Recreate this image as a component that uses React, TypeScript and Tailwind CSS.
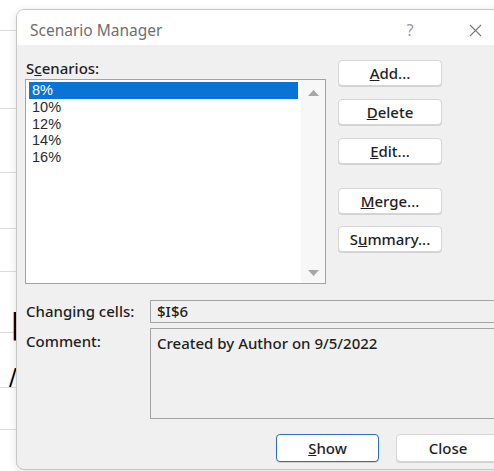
import type { ReactNode } from 'react'

const scenarios = ['8%', '10%', '12%', '14%', '16%']

function DialogButton({
  children,
  primary = false,
  className = '',
}: {
  children: ReactNode
  primary?: boolean
  className?: string
}) {
  return (
    <button
      type="button"
      className={`flex items-center justify-center rounded-[4px] bg-white text-[15px] font-medium text-[#1f1f1f] shadow-[0_1px_0_rgba(0,0,0,0.12)] ${
        primary ? 'border-[1.5px] border-[#2a6fc4]' : 'border border-[#d6d6d6]'
      } ${className}`}
    >
      {children}
    </button>
  )
}

export default function App() {
  return (
    <div className="relative h-[471px] w-[494px] overflow-hidden bg-white font-['Noto_Sans','Open_Sans',sans-serif]">
      {/* worksheet peeking out behind the dialog */}
      <div className="absolute inset-y-0 left-0 flex w-[18px] flex-col">
        <div className="h-[31px] border-b border-[#dcdcdc]" />
        <div className="h-[78px] border-b border-[#dcdcdc]" />
        <div className="h-[64px] border-b border-[#dcdcdc]" />
        <div className="h-[56px] border-b border-[#dcdcdc]" />
        <div className="h-[43px] border-b border-[#dcdcdc]" />
        <div className="h-[61px] border-b border-[#dcdcdc]" />
        <div className="h-[55px] border-b border-[#dcdcdc]" />
        <div className="h-[42px] border-b border-[#dcdcdc]" />
      </div>
      <span className="absolute left-[11px] top-[309px] font-['DejaVu_Sans',sans-serif] text-[32px] font-bold leading-none text-black">
        [
      </span>
      <span className="absolute left-[9px] top-[366px] font-['DejaVu_Sans',sans-serif] text-[23px] leading-none text-black">
        /
      </span>

      <div className="relative pl-[16px] pt-[9px]">
        <div className="flex h-[461px] w-[520px] flex-col overflow-hidden rounded-[8px] border border-[#c6c6c6] bg-[#f0f0f0] shadow-[0_2px_8px_rgba(0,0,0,0.12)]">
          {/* title bar */}
          <div className="flex h-[35px] shrink-0 items-center bg-white pt-[6px] text-[15.5px] text-[#6f6f6f]">
            <span className="w-[377px] pl-[13px]">Scenario Manager</span>
            <span className="w-[32px] text-center text-[#9a9a9a]">?</span>
            <span className="ml-[33px] flex w-[32px] justify-center">
              <svg width="13" height="13" viewBox="0 0 13 13" fill="none">
                <path d="M1 1L12 12M12 1L1 12" stroke="#7a7a7a" strokeWidth="1.1" />
              </svg>
            </span>
          </div>

          {/* body */}
          <div className="flex flex-col pl-[8px] pt-[14px] text-[15px] font-medium text-[#1f1f1f]">
            <div className="flex">
              <div className="flex flex-col">
                <label className="h-[18px] pl-[1px] leading-[18px]">
                  S<u>c</u>enarios:
                </label>
                <div className="mt-[2px] flex h-[205px] w-[301px] border border-[#a3a3a3] bg-white">
                  <ul className="flex flex-1 flex-col pl-[3px] pr-[3px] pt-[2px] font-['Liberation_Sans',sans-serif] text-[14.5px] font-normal">
                    {scenarios.map((s, i) => (
                      <li
                        key={s}
                        className={`h-[16.75px] pl-[3px] leading-[16.75px] ${
                          i === 0 ? 'bg-[#0a74d6] text-white' : 'text-[#2a2a2a]'
                        }`}
                      >
                        {s}
                      </li>
                    ))}
                  </ul>
                  <div className="flex w-[24px] flex-col items-center justify-between bg-[#f7f7f7] pb-[7px] pt-[10px]">
                    <svg width="11" height="6" viewBox="0 0 11 6">
                      <path d="M5.5 0L11 6H0Z" fill="#a6a6a6" />
                    </svg>
                    <svg width="11" height="6" viewBox="0 0 11 6">
                      <path d="M0 0H11L5.5 6Z" fill="#a6a6a6" />
                    </svg>
                  </div>
                </div>
              </div>

              <div className="ml-[12px] mt-[1px] flex flex-col">
                <DialogButton className="h-[26px] w-[104px]">
                  <u>A</u>dd...
                </DialogButton>
                <DialogButton className="mt-[13px] h-[26px] w-[104px]">
                  <u>D</u>elete
                </DialogButton>
                <DialogButton className="mt-[13px] h-[26px] w-[104px]">
                  <u>E</u>dit...
                </DialogButton>
                <DialogButton className="mt-[24px] h-[26px] w-[104px]">
                  <u>M</u>erge...
                </DialogButton>
                <DialogButton className="mt-[12px] h-[26px] w-[104px]">
                  S<u>u</u>mmary...
                </DialogButton>
              </div>
            </div>

            <div className="mt-[16px] flex items-center">
              <span className="w-[125px] pl-[1px]">Changing cells:</span>
              <div className="flex h-[23px] flex-1 items-center border border-[#a3a3a3] bg-[#f0f0f0] pl-[6px]">
                $I$6
              </div>
            </div>

            <div className="mt-[5px] flex">
              <span className="w-[125px] pl-[1px] pt-[2px]">Comment:</span>
              <div className="h-[91px] flex-1 border border-[#a3a3a3] bg-[#f0f0f0] pl-[6px] pt-[4px] leading-[20px]">
                Created by Author on 9/5/2022
              </div>
            </div>

            <div className="mt-[15px] flex pl-[251px]">
              <DialogButton primary className="h-[28px] w-[103px]">
                <u>S</u>how
              </DialogButton>
              <DialogButton className="ml-[17px] h-[28px] w-[104px]">Close</DialogButton>
            </div>
          </div>
        </div>
      </div>
    </div>
  )
}
